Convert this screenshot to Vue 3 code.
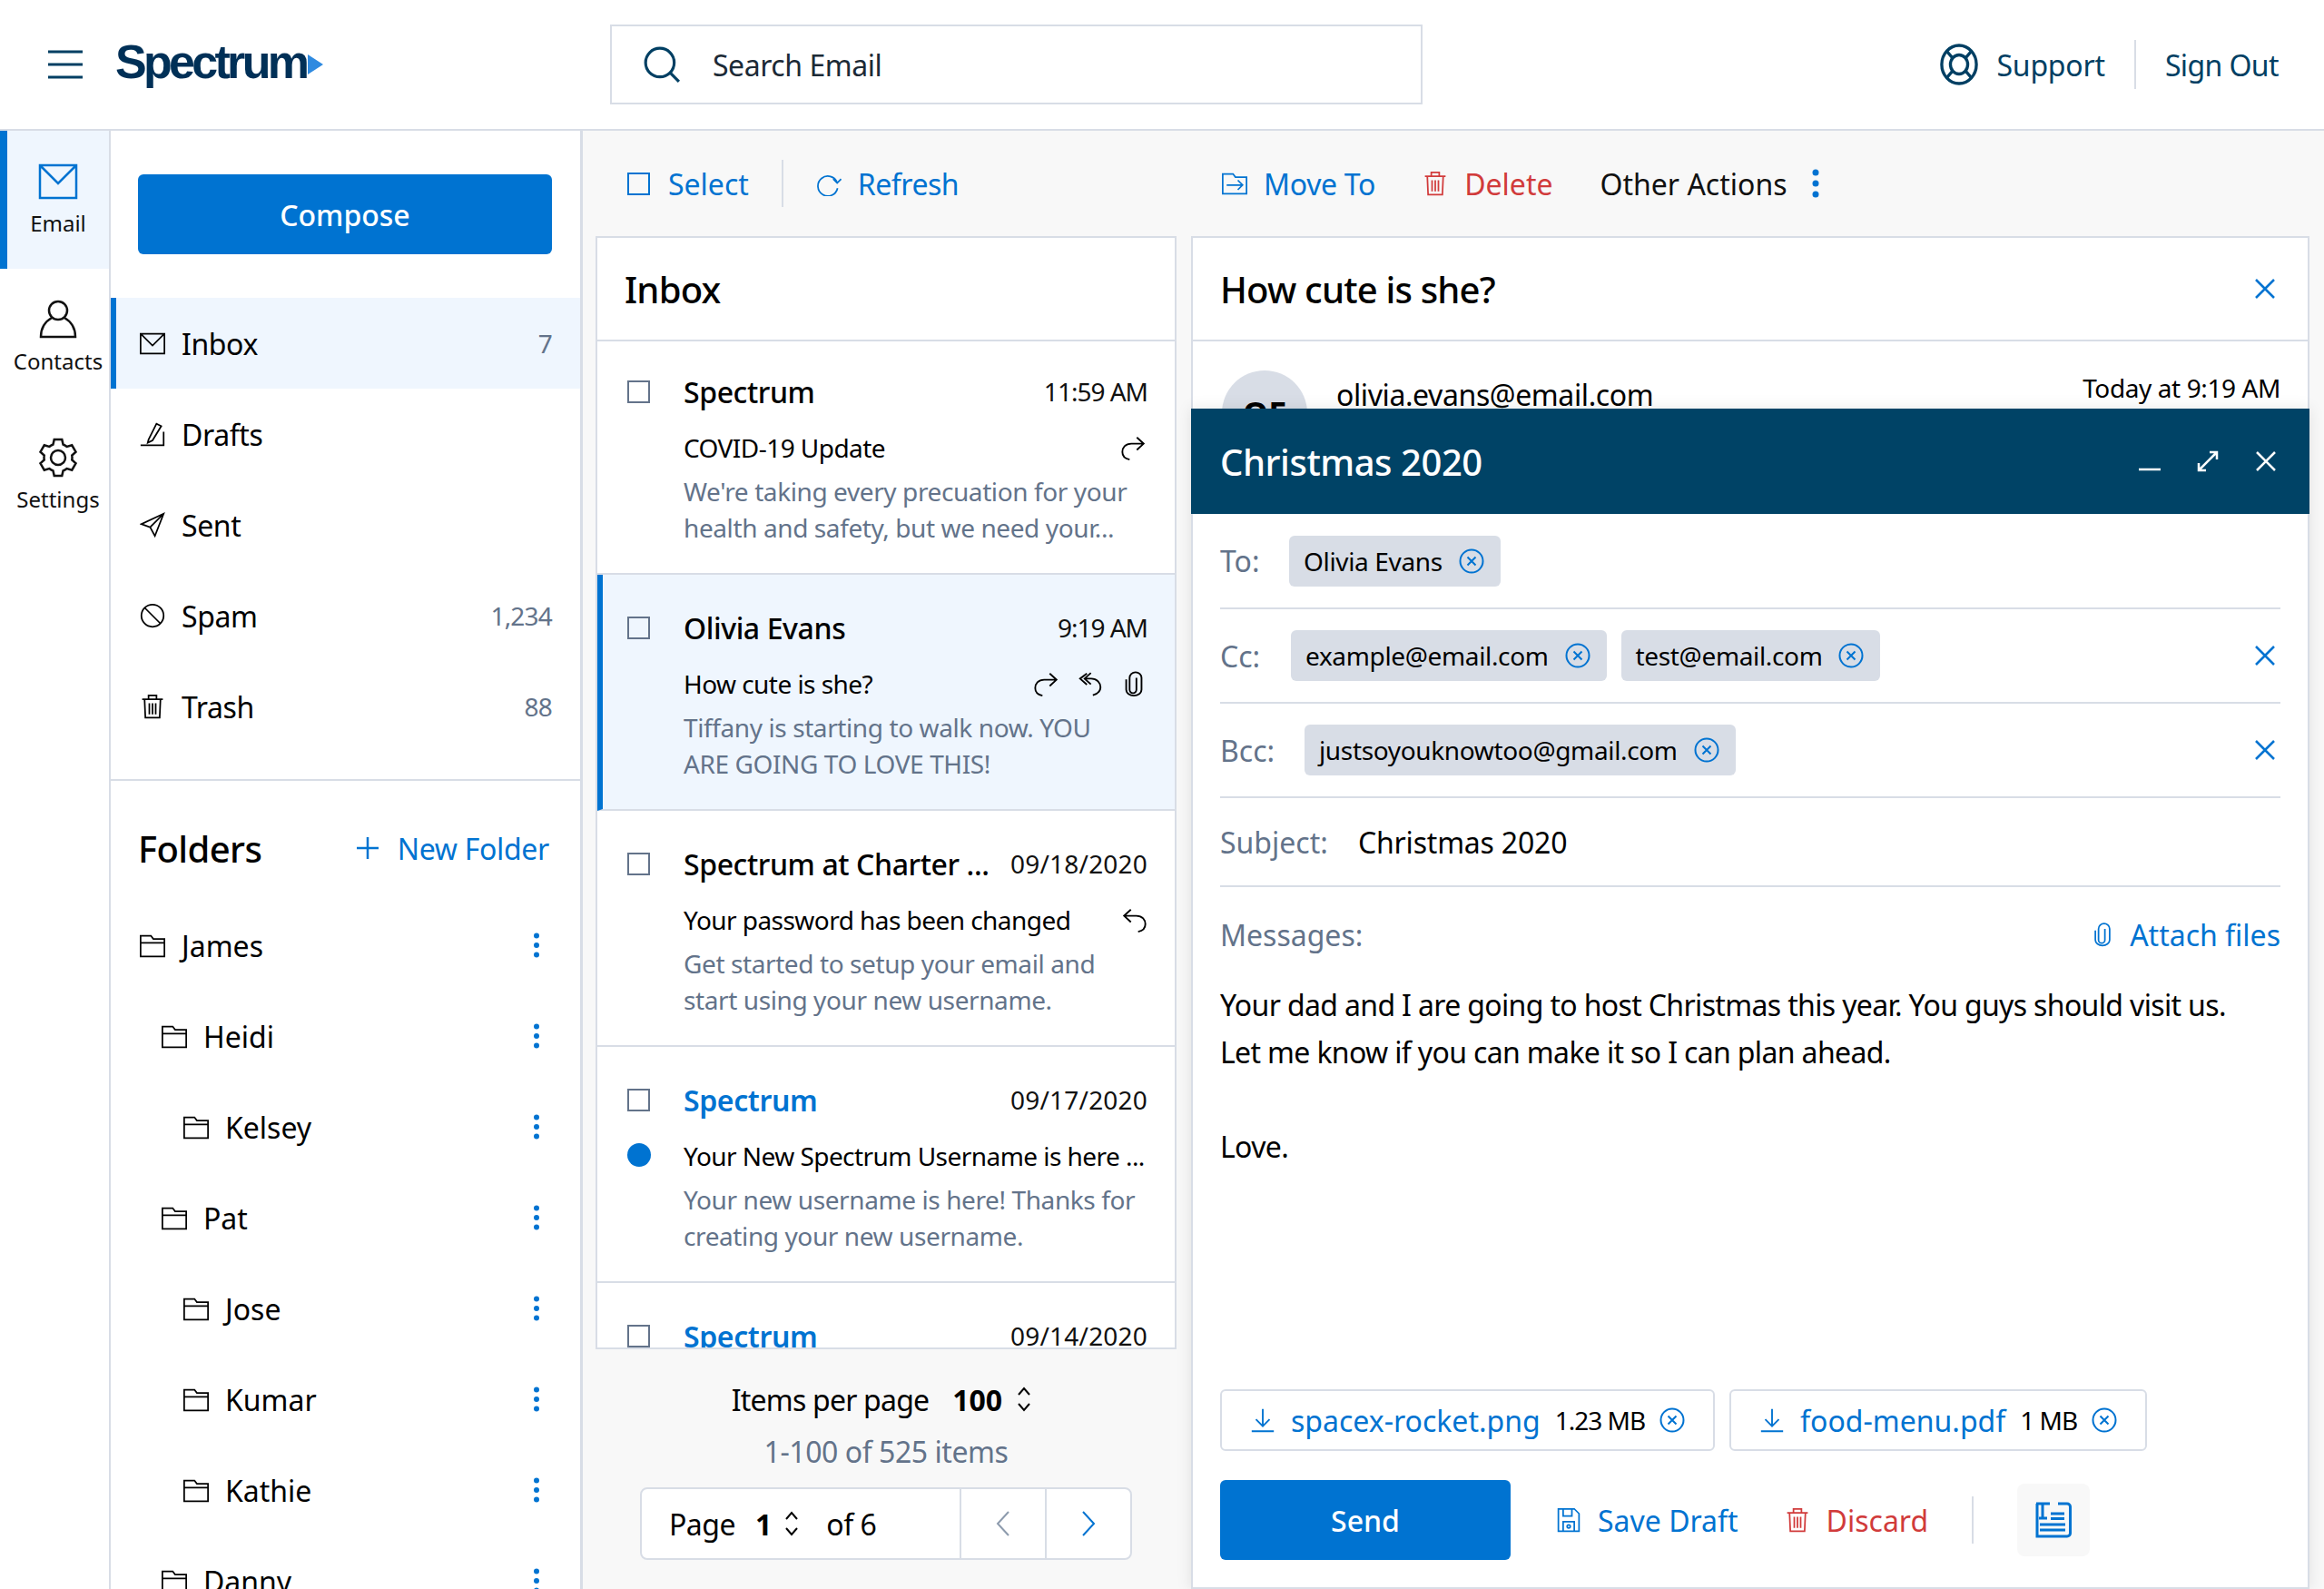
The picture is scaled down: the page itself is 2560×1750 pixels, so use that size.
<template>
  <div class="page">
    <header class="topbar">
      <svg class="burger" viewBox="0 0 40 32"><path d="M1 2h38M1 16h38M1 30h38" /></svg>
      <div class="logo">
        <span class="logo-text">Spectrum</span>
        <svg class="logo-arrow" viewBox="0 0 17 22"><path d="M0 0l17 11L0 22z" /></svg>
      </div>
      <div class="search">
        <svg class="search-icon" viewBox="0 0 40 40"><circle cx="18" cy="18" r="15" /><path d="M29 29l9 9" /></svg>
        <span>Search Email</span>
      </div>
      <div class="top-links">
        <svg class="support-icon" viewBox="0 0 44 48">
          <ellipse cx="22" cy="24" rx="20" ry="22" />
          <ellipse cx="22" cy="24" rx="10" ry="11" />
          <path d="M8 9l7 8M36 9l-7 8M8 39l7-8M36 39l-7-8" />
        </svg>
        <span class="support">Support</span>
        <i class="top-sep"></i>
        <span class="signout">Sign Out</span>
      </div>
    </header>

    <div class="body">
      <nav class="rail">
        <div v-for="item in railItems" :key="item.label" class="rail-item" :class="{ active: item.active }">
          <svg class="rail-icon" viewBox="0 0 44 44" v-html="icons[item.icon]"></svg>
          <span>{{ item.label }}</span>
        </div>
      </nav>

      <aside class="sidebar">
        <div class="compose-wrap"><button class="btn-primary compose-btn">Compose</button></div>
        <ul class="mailboxes">
          <li v-for="box in mailboxes" :key="box.name" class="box" :class="{ active: box.active }">
            <svg class="ic" viewBox="0 0 32 32" v-html="icons[box.icon]"></svg>
            <span class="box-name">{{ box.name }}</span>
            <span class="box-count">{{ box.count }}</span>
          </li>
        </ul>
        <div class="folders">
          <div class="folders-head">
            <h2>Folders</h2>
            <a class="new-folder">
              <svg class="plus" viewBox="0 0 26 26"><path d="M13 1v24M1 13h24" /></svg>
              New Folder
            </a>
          </div>
          <div v-for="f in folders" :key="f.name" class="folder" :class="'lvl' + f.level">
            <svg class="ic" viewBox="0 0 32 32" v-html="icons.folder"></svg>
            <span class="box-name">{{ f.name }}</span>
            <svg class="dots" viewBox="0 0 8 28"><circle cx="4" cy="3.5" r="3" /><circle cx="4" cy="14" r="3" /><circle cx="4" cy="24.500" r="3" /></svg>
          </div>
        </div>
      </aside>

      <main class="main">
        <div class="toolbar">
          <div class="tool-left">
            <span class="tool select"><i class="check blue"></i>Select</span>
            <i class="tool-sep"></i>
            <span class="tool refresh"><svg class="ic" viewBox="0 0 32 32" v-html="icons.refresh"></svg>Refresh</span>
          </div>
          <div class="tool-right">
            <span class="tool move"><svg class="ic" viewBox="0 0 32 32" v-html="icons.move"></svg>Move To</span>
            <span class="tool red"><svg class="ic" viewBox="0 0 32 32" v-html="icons.trash"></svg>Delete</span>
            <span class="tool dark">Other Actions
              <svg class="dots big" viewBox="0 0 8 32"><circle cx="4" cy="4" r="3.500" /><circle cx="4" cy="16" r="3.500" /><circle cx="4" cy="28" r="3.500" /></svg>
            </span>
          </div>
        </div>

        <div class="columns">
          <section class="list-col">
            <div class="panel list-panel">
              <h2 class="panel-title">Inbox</h2>
              <article v-for="m in messages" :key="m.date" class="msg" :class="{ selected: m.selected }">
                <div class="msg-marks">
                  <i class="check"></i>
                  <i v-if="m.unread" class="unread"></i>
                </div>
                <div class="msg-body">
                  <div class="msg-line">
                    <strong class="sender" :class="{ link: m.unread || m.link }">{{ m.sender }}</strong>
                    <span class="date" :class="{ time: m.date.includes('AM') }">{{ m.date }}</span>
                  </div>
                  <div class="msg-line subject-line">
                    <span class="subject">{{ m.subject }}</span>
                    <span class="msg-icons">
                      <svg v-for="ic in m.icons" :key="ic" class="ic-sm" viewBox="0 0 32 32" v-html="icons[ic]"></svg>
                    </span>
                  </div>
                  <p class="preview">{{ m.preview }}</p>
                </div>
              </article>
            </div>
            <div class="pager">
              <div class="per-page">
                <span>Items per page</span><b>100</b>
                <svg class="updown" viewBox="0 0 16 28"><path d="M2 9l6-7 6 7M2 19l6 7 6-7" /></svg>
              </div>
              <div class="range">1-100 of 525 items</div>
              <div class="page-box">
                <div class="page-label">
                  <span>Page</span><b>1</b>
                  <svg class="updown" viewBox="0 0 16 28"><path d="M2 9l6-7 6 7M2 19l6 7 6-7" /></svg>
                  <span class="of">of 6</span>
                </div>
                <div class="page-btn"><svg viewBox="0 0 16 28" class="chev off"><path d="M14 1L2 14l12 13" /></svg></div>
                <div class="page-btn"><svg viewBox="0 0 16 28" class="chev"><path d="M2 1l12 13L2 27" /></svg></div>
              </div>
            </div>
          </section>

          <section class="panel read-panel">
            <div class="read-head">
              <h2 class="panel-title bare">How cute is she?</h2>
              <svg class="cross" viewBox="0 0 24 24"><path d="M2 2l20 20M22 2L2 22" /></svg>
            </div>
            <div class="read-meta">
              <div class="avatar">OE</div>
              <span class="from">olivia.evans@email.com</span>
              <span class="when">Today at 9:19 AM</span>
            </div>

            <!-- compose window sits over the reading pane -->
            <div class="composer">
              <div class="composer-head">
                <span>Christmas 2020</span>
                <div class="win-btns">
                  <svg viewBox="0 0 24 24" class="win"><path d="M0 21h24" /></svg>
                  <svg viewBox="0 0 24 24" class="win"><path d="M14 2h8v8M22 2L2 22M2 14v8h8" /></svg>
                  <svg viewBox="0 0 24 24" class="win"><path d="M2 2l20 20M22 2L2 22" /></svg>
                </div>
              </div>
              <div class="composer-body">
                <div v-for="row in recipients" :key="row.label" class="field" :class="row.cls">
                  <label>{{ row.label }}</label>
                  <div class="chips">
                    <span v-for="c in row.chips" :key="c" class="chip">
                      {{ c }}
                      <svg class="x-circle" viewBox="0 0 28 28"><circle cx="14" cy="14" r="12.500" /><path d="M9.500 9.500l9 9M18.500 9.500l-9 9" /></svg>
                    </span>
                  </div>
                  <svg v-if="row.clear" class="cross" viewBox="0 0 24 24"><path d="M2 2l20 20M22 2L2 22" /></svg>
                </div>
                <div class="field subject-field">
                  <label>Subject:</label>
                  <span class="subject-val">Christmas 2020</span>
                </div>
                <div class="messages-head">
                  <label>Messages:</label>
                  <span class="attach"><svg class="ic" viewBox="0 0 32 32" v-html="icons.clip"></svg>Attach files</span>
                </div>
                <div class="letter">
                  <p>Your dad and I are going to host Christmas this year. You guys should visit us.</p>
                  <p>Let me know if you can make it so I can plan ahead.</p>
                  <p class="gap">Love.</p>
                </div>
                <div class="files">
                  <div v-for="file in files" :key="file.name" class="file">
                    <svg class="ic-sm dl" viewBox="0 0 32 32"><path d="M16 3v19M8 15l8 8 8-8M3 29h26" /></svg>
                    <span class="file-name">{{ file.name }}</span>
                    <span class="file-size">{{ file.size }}</span>
                    <svg class="x-circle" viewBox="0 0 28 28"><circle cx="14" cy="14" r="12.500" /><path d="M9.500 9.500l9 9M18.500 9.500l-9 9" /></svg>
                  </div>
                </div>
                <div class="actions">
                  <button class="btn-primary send-btn">Send</button>
                  <span class="tool"><svg class="ic" viewBox="0 0 32 32" v-html="icons.save"></svg>Save Draft</span>
                  <span class="tool red"><svg class="ic" viewBox="0 0 32 32" v-html="icons.trash"></svg>Discard</span>
                  <i class="act-sep"></i>
                  <div class="note-btn">
                    <svg viewBox="0 0 40 40" class="note"><path d="M1 2h15M8 2v16M4 18h9M17 13h15M17 18.500h15M5 25h28M5 31h28M25 2h10a3.500 3.500 0 0 1 3.500 3.500v29a3.500 3.500 0 0 1-3.500 3.500H2V2" /></svg>
                  </div>
                </div>
              </div>
            </div>
          </section>
        </div>
      </main>
    </div>
  </div>
</template>

<script setup>
// six-tooth gear outline, centred in the 44 box
function gearPath() {
  const pt = (deg, r) => {
    const a = (deg * Math.PI) / 180
    return `${(22 + r * Math.cos(a)).toFixed(2)} ${(22 + r * Math.sin(a)).toFixed(2)}`
  }
  let d = ''
  for (let i = 0; i < 6; i++) {
    const a = -90 + i * 60
    d += `${i ? 'A15.500 15.500 0 0 1 ' : 'M'}${pt(a - 21, 15.5)}L${pt(a - 12, 20.5)}L${pt(a + 12, 20.5)}L${pt(a + 21, 15.5)}`
  }
  return `<path d="${d}A15.500 15.500 0 0 1 ${pt(-111, 15.5)}z" /><circle cx="22" cy="22" r="8" />`
}

const icons = {
  mail: '<path d="M2 4h40v36H2zM3 5l19 19L41 5" />',
  person: '<circle cx="22" cy="12" r="10" /><path d="M15 20C8 24 3 31 3 41h38c0-10-5-17-12-21" />',
  gear: gearPath(),
  inbox: '<path d="M1 4h30v25H1zM2 5l14 14L30 5" />',
  draft: '<path d="M11 23L21 3l6 3-11 18-6 3zM1 30h30M30 13v17" />',
  sent: '<path d="M30 2L2 15l11 4 6 11zM30 2L13 19" />',
  spam: '<circle cx="16" cy="16" r="14" /><path d="M6 6l20 20" />',
  trash: '<path d="M3 7h26M11 7V2h10v5M6 7l1 23h18l1-23M12 12v14M16 12v14M20 12v14" />',
  folder: '<path d="M1 30V4h13l3 4h14v22zM1 13h30" />',
  refresh: '<path d="M27 22A12.500 12.500 0 1 1 26.500 15M21.500 10.500l5 5 5-5" />',
  move: '<path d="M1 4h13l3 4h14v21H1zM6 18h20M20 12l6 6-6 6" />',
  forward: '<path d="M27.500 11.300H13C6 11.300 2.500 16 2.500 21c0 5 3.500 8 8.500 9M19.500 4l8 7.300-8 7.300" />',
  reply: '<path d="M4.500 11.300H19c7 0 10.500 4.700 10.500 9.700 0 5-3.500 8-8.500 9M12.500 4l-8 7.300 8 7.300" />',
  replyall: '<path d="M9.300 10H17c7 0 11 5 11 10 0 6-4 8-9 9.500M16.700 3.300L9.300 10l7.400 6.700M12 4l-8 6 8 7" />',
  clip: '<path d="M7 11v12a9 7 0 0 0 18 0V9a7 6.500 0 0 0-14 0v14a4 4 0 0 0 8 0V9" />',
  save: '<path d="M3 2h20l6 6v22H3zM9 2v9h11V2M9 30V18h14v12" /><circle cx="16" cy="24" r="2" />',
}

const railItems = [
  { label: 'Email', icon: 'mail', active: true },
  { label: 'Contacts', icon: 'person' },
  { label: 'Settings', icon: 'gear' },
]

const mailboxes = [
  { name: 'Inbox', icon: 'inbox', count: '7', active: true },
  { name: 'Drafts', icon: 'draft' },
  { name: 'Sent', icon: 'sent' },
  { name: 'Spam', icon: 'spam', count: '1,234' },
  { name: 'Trash', icon: 'trash', count: '88' },
]

const folders = [
  { name: 'James', level: 0 },
  { name: 'Heidi', level: 1 },
  { name: 'Kelsey', level: 2 },
  { name: 'Pat', level: 1 },
  { name: 'Jose', level: 2 },
  { name: 'Kumar', level: 2 },
  { name: 'Kathie', level: 2 },
  { name: 'Danny', level: 1 },
]

const messages = [
  {
    sender: 'Spectrum',
    date: '11:59 AM',
    subject: 'COVID-19 Update',
    preview: "We're taking every precuation for your health and safety, but we need your...",
    icons: ['forward'],
  },
  {
    sender: 'Olivia Evans',
    date: '9:19 AM',
    subject: 'How cute is she?',
    preview: 'Tiffany is starting to walk now. YOU ARE GOING TO LOVE THIS!',
    icons: ['forward', 'replyall', 'clip'],
    selected: true,
  },
  {
    sender: 'Spectrum at Charter ...',
    date: '09/18/2020',
    subject: 'Your password has been changed',
    preview: 'Get started to setup your email and start using your new username.',
    icons: ['reply'],
  },
  {
    sender: 'Spectrum',
    date: '09/17/2020',
    subject: 'Your New Spectrum Username is here ...',
    preview: 'Your new username is here! Thanks for creating your new username.',
    icons: [],
    unread: true,
  },
  {
    sender: 'Spectrum',
    date: '09/14/2020',
    subject: '',
    preview: '',
    icons: [],
    link: true,
  },
]

const recipients = [
  { label: 'To:', chips: ['Olivia Evans'], cls: 'to' },
  { label: 'Cc:', chips: ['example@email.com', 'test@email.com'], clear: true, cls: 'cc' },
  { label: 'Bcc:', chips: ['justsoyouknowtoo@gmail.com'], clear: true, cls: 'bcc' },
]

const files = [
  { name: 'spacex-rocket.png', size: '1.23 MB' },
  { name: 'food-menu.pdf', size: '1 MB' },
]
</script>

<style>
html,
body {
  margin: 0;
  background: #fff;
}
</style>

<style scoped>
.page {
  width: 2560px;
  height: 1750px;
  overflow: hidden;
  font-family: "Noto Sans", "Open Sans", sans-serif;
  font-size: 32px;
  color: #000;
  display: flex;
  flex-direction: column;
}
svg {
  fill: none;
  stroke: currentColor;
  flex-shrink: 0;
}
i {
  display: block;
  font-style: normal;
}
h2,
p,
ul {
  margin: 0;
  padding: 0;
}

/* top bar */
.topbar {
  height: 142px;
  flex-shrink: 0;
  border-bottom: 2px solid #d8dde6;
  display: flex;
  align-items: center;
  padding: 0 50px 0 52px;
  color: #003f63;
}
.burger {
  width: 40px;
  height: 32px;
  stroke-width: 3px;
}
.logo {
  width: 545px;
  margin: 0 0 6px 35px;
  display: flex;
  align-items: center;
}
.logo-text {
  font-family: "Liberation Sans", sans-serif;
  font-weight: 700;
  font-size: 52px;
  letter-spacing: -3.7px;
  color: #003057;
  line-height: 1;
}
.logo-arrow {
  width: 17px;
  height: 22px;
  fill: #2f8ae0;
  stroke: none;
  margin: 6px 0 0 2px;
}
.search {
  width: 895px;
  height: 88px;
  box-sizing: border-box;
  border: 2px solid #d8dde6;
  display: flex;
  align-items: center;
  padding-left: 34px;
  gap: 35px;
  color: #1c2a36;
  letter-spacing: -0.45px;
}
.search-icon {
  width: 42px;
  height: 42px;
  stroke-width: 3px;
  color: #003f63;
}
.top-links {
  margin-left: auto;
  display: flex;
  align-items: center;
  gap: 20px;
  font-size: 32px;
}
.support {
  letter-spacing: -0.2px;
}
.signout {
  letter-spacing: -0.6px;
}
.support-icon {
  width: 42px;
  height: 48px;
  stroke-width: 3.500px;
}
.top-sep {
  width: 2px;
  height: 54px;
  background: #d8dde6;
  margin: 0 12px;
}

/* layout */
.body {
  flex: 1;
  display: flex;
  min-height: 0;
}
.rail {
  width: 120px;
  flex-shrink: 0;
  border-right: 2px solid #d8dde6;
}
.rail-item {
  height: 152px;
  box-sizing: border-box;
  padding: 34px 0 0 8px;
  display: flex;
  flex-direction: column;
  align-items: center;
  gap: 7px;
  font-size: 24px;
  color: #111;
}
.rail-item.active {
  background: #eff6fe;
  border-left: 8px solid #0073d1;
  padding-left: 0;
}
.rail-icon {
  width: 44px;
  height: 44px;
  stroke-width: 2.500px;
}
.rail-item.active .rail-icon {
  color: #0073d1;
}

/* sidebar */
.sidebar {
  width: 520px;
  flex-shrink: 0;
  box-sizing: border-box;
  border-right: 3px solid #d8dde6;
  overflow: hidden;
}
.compose-wrap {
  padding: 48px 31px 48px 30px;
}
.btn-primary {
  display: block;
  background: #0073d1;
  color: #fff;
  border: 0;
  border-radius: 6px;
  font: inherit;
  font-weight: 500;
}
.compose-btn {
  width: 100%;
  height: 88px;
}
.mailboxes {
  list-style: none;
  padding-bottom: 30px;
  border-bottom: 2px solid #d8dde6;
}
.box,
.folder {
  height: 100px;
  box-sizing: border-box;
  display: flex;
  align-items: center;
  padding: 0 31px 0 32px;
  gap: 18px;
}
.box.active {
  background: #eff6fe;
  border-left: 6px solid #0073d1;
  padding-left: 26px;
}
.ic {
  width: 28px;
  height: 28px;
  stroke-width: 2px;
}
.box-name {
  flex: 1;
}
.box .box-name {
  letter-spacing: -0.4px;
}
.box-count {
  color: #63738a;
  font-size: 28px;
  letter-spacing: -0.8px;
}
.folders-head {
  height: 131px;
  box-sizing: border-box;
  display: flex;
  align-items: center;
  justify-content: space-between;
  padding: 17px 34px 0 30px;
}
.folders-head h2 {
  font-size: 40px;
  font-weight: 500;
  letter-spacing: -0.6px;
}
.new-folder {
  display: flex;
  align-items: center;
  gap: 20px;
  color: #0073d1;
  letter-spacing: -0.3px;
}
.plus {
  width: 26px;
  height: 26px;
  stroke-width: 2.500px;
}
.folder {
  padding-right: 44px;
}
.lvl1 {
  padding-left: 56px;
}
.lvl2 {
  padding-left: 80px;
}
.dots {
  width: 8px;
  height: 28px;
  fill: #0073d1;
  stroke: none;
}
.dots.big {
  height: 32px;
  margin-left: 27px;
}

/* main */
.main {
  flex: 1;
  min-width: 0;
  background: #f8f8f8;
  display: flex;
  flex-direction: column;
}
.toolbar {
  height: 116px;
  flex-shrink: 0;
  display: flex;
  align-items: center;
  padding-left: 49px;
}
.tool-left {
  width: 655px;
  display: flex;
  align-items: center;
}
.tool-right {
  display: flex;
  align-items: center;
  gap: 52px;
}
.tool {
  display: inline-flex;
  align-items: center;
  gap: 18px;
  color: #0073d1;
}
.tool.select {
  gap: 20px;
}
.tool.refresh {
  letter-spacing: -0.5px;
}
.tool.move {
  letter-spacing: -0.3px;
}
.tool.red {
  color: #d13b3b;
}
.tool.dark {
  color: #111;
  gap: 0;
}
.tool-sep {
  width: 2px;
  height: 52px;
  background: #d8dde6;
  margin: 0 36px;
}
.check {
  width: 25px;
  height: 25px;
  box-sizing: border-box;
  border: 2px solid #63738a;
}
.check.blue {
  border-color: #0073d1;
}
.columns {
  flex: 1;
  min-height: 0;
  display: flex;
  padding: 0 16px 0 14px;
  gap: 16px;
}
.panel {
  background: #fff;
  border: 2px solid #d8dde6;
  box-sizing: border-box;
}
.list-col {
  width: 640px;
  flex-shrink: 0;
  display: flex;
  flex-direction: column;
}
.list-panel {
  height: 1226px;
  overflow: hidden;
}
.panel-title {
  font-size: 40px;
  font-weight: 500;
  height: 114px;
  box-sizing: border-box;
  padding: 0 30px;
  display: flex;
  align-items: center;
  border-bottom: 2px solid #d8dde6;
  letter-spacing: -0.8px;
}
.panel-title.bare {
  border: 0;
  padding: 0;
}
.msg {
  height: 260px;
  box-sizing: border-box;
  border-bottom: 2px solid #d8dde6;
  display: flex;
  padding: 34px 30px 0 33px;
}
.msg:first-of-type {
  height: 257px;
  padding-top: 31px;
}
.msg.selected {
  background: #eff6fe;
  border-left: 6px solid #0073d1;
  padding-left: 27px;
}
.msg-marks {
  width: 62px;
  flex-shrink: 0;
  padding-top: 12px;
}
.unread {
  width: 26px;
  height: 26px;
  border-radius: 50%;
  background: #0073d1;
  margin-top: 35px;
}
.msg-body {
  flex: 1;
  min-width: 0;
}
.msg-line {
  display: flex;
  justify-content: space-between;
  align-items: center;
  height: 48px;
}
.sender {
  font-weight: 500;
  font-size: 32px;
  letter-spacing: -0.4px;
}
.sender.link {
  color: #0073d1;
  font-weight: 600;
}
.date {
  font-size: 28px;
  color: #111;
  letter-spacing: 0.2px;
}
.date.time {
  letter-spacing: -1px;
}
.subject-line {
  height: 48px;
  margin-top: 14px;
}
.subject {
  font-size: 28px;
  white-space: nowrap;
  letter-spacing: -0.55px;
}
.msg-icons {
  display: flex;
  gap: 18px;
}
.ic-sm {
  width: 30px;
  height: 30px;
  stroke-width: 2px;
}
.preview {
  font-size: 28px;
  line-height: 40px;
  color: #63738a;
  margin-top: 4px;
  max-width: 502px;
  letter-spacing: -0.4px;
}

/* pager */
.pager {
  flex: 1;
  display: flex;
  flex-direction: column;
  align-items: center;
}
.per-page {
  margin-top: 30px;
  padding-right: 10px;
  height: 50px;
  display: flex;
  align-items: center;
  letter-spacing: -0.8px;
}
.per-page b,
.page-label b {
  margin-left: 26px;
  font-weight: 700;
  letter-spacing: 0;
}
.updown {
  width: 16px;
  height: 28px;
  stroke-width: 2px;
  margin-left: 16px;
}
.range {
  margin-top: 8px;
  height: 50px;
  line-height: 50px;
  color: #63738a;
  letter-spacing: -0.45px;
}
.page-box {
  margin-top: 14px;
  width: 542px;
  height: 80px;
  box-sizing: border-box;
  background: #fff;
  border: 2px solid #d8dde6;
  border-radius: 8px;
  display: flex;
}
.page-label {
  flex: 1;
  display: flex;
  align-items: center;
  padding-left: 30px;
  letter-spacing: -0.5px;
}
.page-label b {
  margin-left: 22px;
}
.page-label .updown {
  margin-left: 14px;
}
.of {
  margin-left: 30px;
}
.page-btn {
  width: 92px;
  border-left: 2px solid #d8dde6;
  display: flex;
  align-items: center;
  justify-content: center;
}
.chev {
  width: 16px;
  height: 28px;
  stroke-width: 2px;
  color: #0073d1;
}
.chev.off {
  color: #8d9bad;
}

/* reading pane */
.read-panel {
  flex: 1;
  min-width: 0;
  position: relative;
  border-bottom: 0;
}
.read-head {
  height: 114px;
  box-sizing: border-box;
  border-bottom: 2px solid #d8dde6;
  display: flex;
  align-items: center;
  justify-content: space-between;
  padding: 0 35px 0 30px;
}
.cross {
  width: 24px;
  height: 24px;
  stroke-width: 2.500px;
  color: #0073d1;
}
.read-meta {
  display: flex;
  align-items: flex-start;
  padding: 32px 30px 0 32px;
  font-size: 32px;
}
.avatar {
  width: 94px;
  height: 94px;
  border-radius: 50%;
  background: #d8dde6;
  display: flex;
  align-items: center;
  justify-content: center;
  font-weight: 700;
  font-size: 36px;
}
.from {
  margin: 5px 0 0 32px;
  letter-spacing: -0.4px;
}
.when {
  margin-left: auto;
  font-size: 28px;
  letter-spacing: -0.4px;
}

/* compose window over the reading pane */
.composer {
  position: absolute;
  left: -2px;
  right: -2px;
  top: 188px;
  bottom: 0;
  background: #fff;
  border: solid #d8dde6;
  border-width: 0 2px 2px;
  box-sizing: border-box;
  box-shadow: 0 0 16px rgba(0, 0, 0, 0.1);
  display: flex;
  flex-direction: column;
}
.composer-head {
  height: 116px;
  flex-shrink: 0;
  margin: 0 -2px;
  background: #004366;
  color: #fff;
  font-size: 40px;
  font-weight: 500;
  letter-spacing: -0.45px;
  display: flex;
  align-items: center;
  justify-content: space-between;
  padding: 0 36px 0 32px;
}
.win-btns {
  display: flex;
  gap: 40px;
}
.win {
  width: 24px;
  height: 24px;
  stroke-width: 2.500px;
}
.composer-body {
  flex: 1;
  min-height: 0;
  padding: 0 30px;
  display: flex;
  flex-direction: column;
}
.field {
  height: 104px;
  box-sizing: border-box;
  border-bottom: 2px solid #d8dde6;
  display: flex;
  align-items: center;
}
.field .cross {
  margin-right: 5px;
}
.field.to {
  height: 105px;
}
.field label,
.messages-head label {
  color: #63738a;
}
.to label {
  width: 76px;
}
.cc label {
  width: 78px;
}
.bcc label {
  width: 93px;
}
.chips {
  flex: 1;
  display: flex;
  gap: 16px;
}
.chip {
  height: 56px;
  box-sizing: border-box;
  background: #d8dde6;
  border-radius: 6px;
  padding: 0 18px 0 16px;
  display: flex;
  align-items: center;
  gap: 18px;
  font-size: 28px;
  letter-spacing: -0.35px;
}
.x-circle {
  width: 28px;
  height: 28px;
  stroke-width: 2px;
  color: #0073d1;
}
.subject-field {
  height: 98px;
}
.subject-field label {
  width: 152px;
}
.subject-val {
  letter-spacing: -0.2px;
}
.messages-head {
  height: 104px;
  flex-shrink: 0;
  display: flex;
  align-items: center;
  justify-content: space-between;
}
.attach {
  display: flex;
  align-items: center;
  gap: 16px;
  color: #0073d1;
}
.letter {
  flex: 1;
  font-size: 32px;
  line-height: 52px;
  letter-spacing: -0.65px;
}
.letter .gap {
  margin-top: 52px;
}
.files {
  display: flex;
  gap: 16px;
}
.file {
  height: 68px;
  box-sizing: border-box;
  border: 2px solid #d8dde6;
  border-radius: 6px;
  padding: 0 31px 0 30px;
  display: flex;
  align-items: center;
  font-size: 28px;
  gap: 16px;
}
.file-name {
  font-size: 32px;
  color: #0073d1;
}
.file-size {
  letter-spacing: -1px;
}
.file .dl {
  color: #0073d1;
}
.actions {
  display: flex;
  align-items: center;
  margin: 32px 0 30px;
  gap: 48px;
}
.actions .red {
  margin-left: 3px;
}
.send-btn {
  width: 320px;
  height: 88px;
  margin-right: 2px;
}
.act-sep {
  width: 2px;
  height: 52px;
  background: #d8dde6;
}
.note-btn {
  width: 80px;
  height: 80px;
  background: #f8f8f8;
  border-radius: 8px;
  display: flex;
  align-items: center;
  justify-content: center;
}
.note {
  width: 40px;
  height: 40px;
  stroke-width: 3px;
  color: #0073d1;
}
</style>
